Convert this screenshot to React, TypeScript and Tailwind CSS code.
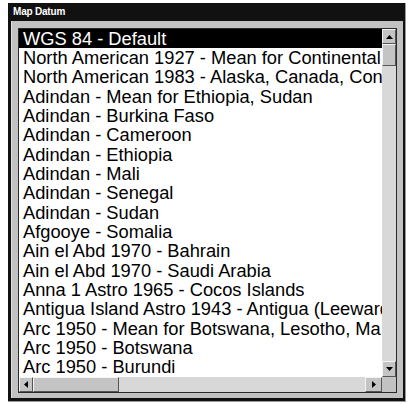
import React from "react";

const datums = [
  "WGS 84 - Default",
  "North American 1927 - Mean for Continental",
  "North American 1983 - Alaska, Canada, Cont",
  "Adindan - Mean for Ethiopia, Sudan",
  "Adindan - Burkina Faso",
  "Adindan - Cameroon",
  "Adindan - Ethiopia",
  "Adindan - Mali",
  "Adindan - Senegal",
  "Adindan - Sudan",
  "Afgooye - Somalia",
  "Ain el Abd 1970 - Bahrain",
  "Ain el Abd 1970 - Saudi Arabia",
  "Anna 1 Astro 1965 - Cocos Islands",
  "Antigua Island Astro 1943 - Antigua (Leeward",
  "Arc 1950 - Mean for Botswana, Lesotho, Ma",
  "Arc 1950 - Botswana",
  "Arc 1950 - Burundi",
];

type Dir = "up" | "down" | "left" | "right";

function Arrow({ dir }: { dir: Dir }) {
  const pts: Record<Dir, string> = {
    up: "0,4 3.5,0 7,4",
    down: "0,0 7,0 3.5,4",
    left: "4,0 4,7 0,3.5",
    right: "0,0 4,3.5 0,7",
  };
  const vertical = dir === "up" || dir === "down";
  return (
    <svg
      width={vertical ? 7 : 4}
      height={vertical ? 4 : 7}
      viewBox={vertical ? "0 0 7 4" : "0 0 4 7"}
    >
      <polygon points={pts[dir]} fill="#000" />
    </svg>
  );
}

const bevel =
  "bg-[#c4c4c4] border border-t-[#f4f4f4] border-l-[#f4f4f4] border-r-[#555] border-b-[#555]";

export default function App() {
  return (
    <div
      className="w-[412px] h-[404px] bg-white pl-[8px] pt-[3px]"
      style={{ fontFamily: '"Liberation Sans", Arial, sans-serif' }}
    >
      {/* window shadow edge */}
      <div className="w-[398px] h-[399px] bg-[#9a9a9a] pr-[2px] pb-[1px] flex">
        {/* black frame */}
        <div className="flex-1 bg-[#111] pl-[3px] pr-[2px] pb-[3px] flex flex-col">
          <div className="h-[18px] flex items-center pl-[2px] text-white text-[10px] font-bold leading-none tracking-[-0.2px]">
            Map Datum
          </div>
          <div className="flex-1 bg-[#c2c2c2] pl-[6px] pr-[6px] pt-[7px] pb-[5px] border-l border-[#dedede]">
            {/* list box */}
            <div className="w-[379px] h-[365px] border border-[#2a2a2a] grid grid-cols-[363px_14px] grid-rows-[348px_15px] bg-white">
              <div className="grid grid-rows-[repeat(18,minmax(0,1fr))] overflow-hidden">
                {datums.map((d, i) => (
                  <div
                    key={d}
                    className={`flex items-center pl-[4px] whitespace-nowrap overflow-hidden text-[18.3px] leading-none ${
                      i === 0 ? "bg-black text-white" : "text-black"
                    }`}
                  >
                    {d}
                  </div>
                ))}
              </div>
              {/* vertical scrollbar */}
              <div className="flex flex-col bg-[#d8d8d8]">
                <div className={`h-[15px] flex items-center justify-center ${bevel}`}>
                  <Arrow dir="up" />
                </div>
                <div className={`h-[22px] ${bevel}`} />
                <div className="flex-1" />
                <div className={`h-[16px] flex items-center justify-center ${bevel}`}>
                  <Arrow dir="down" />
                </div>
              </div>
              {/* horizontal scrollbar */}
              <div className="flex bg-[#d8d8d8]">
                <div className={`w-[14px] flex items-center justify-center ${bevel}`}>
                  <Arrow dir="left" />
                </div>
                <div className={`w-[86px] ${bevel}`} />
                <div className="flex-1" />
                <div className={`w-[17px] flex items-center justify-center ${bevel}`}>
                  <Arrow dir="right" />
                </div>
              </div>
              <div className="bg-[#c2c2c2]" />
            </div>
          </div>
        </div>
      </div>
    </div>
  );
}
